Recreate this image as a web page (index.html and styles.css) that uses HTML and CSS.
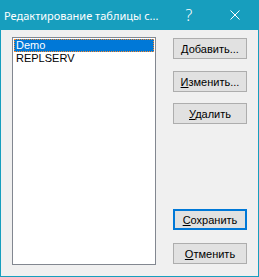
FILE: index.html
```html
<!DOCTYPE html>
<html lang="ru">
<head>
    <meta charset="UTF-8">
    <title>Редактирование таблицы серверов</title>
    <link rel="stylesheet" href="styles.css">
</head>
<body>

    <div class="window">
        <div class="titlebar">
            <span class="title">Редактирование таблицы с...</span>
            <span class="caption-btn help">?</span>
            <span class="caption-btn close">
                <svg width="10" height="10" viewBox="0 0 10 10">
                    <path d="M0.5 0.5 L9.5 9.5 M9.5 0.5 L0.5 9.5" stroke="#fff" stroke-width="1" fill="none"/>
                </svg>
            </span>
        </div>

        <div class="dialog">
            <div class="listbox">
                <div class="item selected">Demo</div>
                <div class="item">REPLSERV</div>
            </div>

            <div class="actions">
                <button class="btn"><u>Д</u>обавить...</button>
                <button class="btn edit"><u>И</u>зменить...</button>
                <button class="btn remove"><u>У</u>далить</button>
                <button class="btn save default"><u>С</u>охранить</button>
                <button class="btn cancel"><u>О</u>тменить</button>
            </div>
        </div>
    </div>

</body>
</html>
```

FILE: styles.css
```css
body {
    margin: 0;
    font-family: "Liberation Sans", Arial, sans-serif;
    font-size: 11px;
    color: #000;
    background: #fff;
}
.window {
    width: 259px;
    height: 277px;
    box-sizing: border-box;
    border: 1px solid #179ebe;
    border-top: none;
    background: #f0f0f0;
    display: flex;
    flex-direction: column;
}
.titlebar {
    height: 30px;
    flex: none;
    display: flex;
    align-items: center;
    background: #179ebe;
    color: #fff;
}
.title {
    flex: 1;
    padding-left: 3px;
    font-family: "Noto Sans", "Open Sans", sans-serif;
    font-size: 11px;
    white-space: nowrap;
}
.caption-btn {
    width: 46px;
    height: 30px;
    flex: none;
    display: flex;
    align-items: center;
    justify-content: center;
}
.help {
    font-family: "Noto Sans", sans-serif;
    font-size: 16px;
    font-weight: 300;
}
.dialog {
    flex: 1;
    display: flex;
    padding: 7px 11px 11px 11px;
}
.listbox {
    width: 144px;
    height: 228px;
    box-sizing: border-box;
    border: 1px solid #828790;
    background: #fff;
    padding: 1px;
}
.item {
    height: 13px;
    line-height: 13px;
    padding-left: 2px;
    white-space: nowrap;
}
.item.selected {
    background: #0078d7;
    color: #fff;
    outline: 1px dotted #ff8a28;
    outline-offset: -1px;
}
.actions {
    width: 74px;
    margin-left: 17px;
    height: 228px;
    box-sizing: border-box;
    padding: 1px 0 1px 0;
    display: flex;
    flex-direction: column;
}
.btn {
    width: 74px;
    height: 21px;
    box-sizing: border-box;
    border: 1px solid #adadad;
    background: #e1e1e1;
    font-family: "Liberation Sans", Arial, sans-serif;
    font-size: 11px;
    color: #000;
    padding: 0;
    margin: 0;
}
.btn.edit {
    margin-top: 12px;
}
.btn.remove {
    margin-top: 11px;
}
.btn.save {
    margin-top: auto;
}
.btn.cancel {
    margin-top: 13px;
}
.btn.default {
    border: 2px solid #0078d7;
}
```
